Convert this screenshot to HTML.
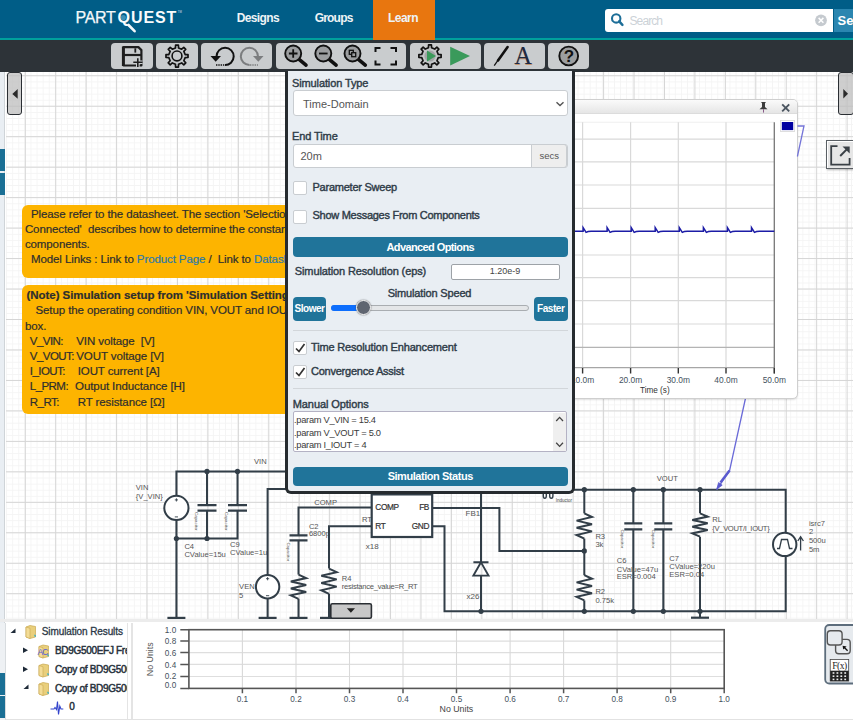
<!DOCTYPE html>
<html><head><meta charset="utf-8">
<style>
*{box-sizing:border-box;margin:0;padding:0}
html,body{width:853px;height:720px;overflow:hidden;background:#fff;font-family:"Liberation Sans",sans-serif;color:#333}
.abs{position:absolute}
#hdr{position:absolute;left:0;top:0;width:853px;height:38px;background:#005d87}
#teal{position:absolute;left:0;top:38px;width:853px;height:2px;background:#00a09c}
#tb{position:absolute;left:0;top:40px;width:853px;height:32px;background:#2d3338}
.nav{position:absolute;font-size:12px;line-height:12px;font-weight:bold;color:#eef3f6}
#learn{position:absolute;left:373px;top:0;width:62px;height:40px;background:#e8760f}
.btn{position:absolute;top:43px;height:26px;background:#c9ccce;border-radius:4px}
#canvas{position:absolute;left:6px;top:72px;width:847px;height:547.3px;background-color:#fff;
background-image:linear-gradient(to right,#d5d5d5 1.3px,transparent 1.3px),linear-gradient(to bottom,#d5d5d5 1.3px,transparent 1.3px),linear-gradient(to right,#f4f4f4 1px,transparent 1px),linear-gradient(to bottom,#f4f4f4 1px,transparent 1px);
background-size:30.44px 30.47px,30.44px 30.47px,6.088px 6.094px,6.088px 6.094px;
background-position:18.8px 3.25px,18.8px 3.25px,0.24px 3.4px,0.24px 3.4px}
#lstrip{position:absolute;left:0;top:72px;width:5px;height:648px;background:#e9eef3;border-right:1px solid #cfd4d8}
.orange{position:absolute;background:#fdb400;border-radius:6px;font-size:12px;line-height:15.2px;color:#2d2d2d;white-space:pre;overflow:hidden}
#sim{position:absolute;left:285.2px;top:71px;width:289.8px;height:422.8px;background:#e9eef3;border:3.2px solid #262b2f;border-top:none;border-radius:0 0 6px 6px}
.lbl{position:absolute;font-size:11px;font-weight:normal;-webkit-text-stroke:0.4px #2e3b47;color:#2e3b47;letter-spacing:-0.15px;white-space:pre}
.inp{position:absolute;background:#fff;border:1px solid #c9cdd1;border-radius:3px}
.bbtn{position:absolute;background:#20749a;color:#fff;font-weight:bold;font-size:11px;text-align:center;border-radius:4px;letter-spacing:-0.4px}
.cb{position:absolute;width:14px;height:14px;background:#fff;border:1px solid #c9cdd1;border-radius:2px}
#popup{position:absolute;left:560px;top:100px;width:238px;height:297px;background:#fff;border:1px solid #d0d0d0;border-radius:6px;overflow:hidden}
.bot{position:absolute}
.otx{position:absolute;font-size:11.5px;line-height:15.2px;color:#2e2e2e;white-space:pre;letter-spacing:-0.1px;-webkit-text-stroke:0.2px #2e2e2e}
</style></head><body>

<div id="canvas"></div>
<!--SCHEM-->
<svg class="abs" style="left:0;top:0" width="853" height="720" font-family="Liberation Sans, sans-serif"><g fill="none" stroke="#323e48" stroke-width="2.0"><path d="M286.0 471.4 L176.4 471.4 L176.4 495.8"/>
<path d="M176.4 519.9 L176.4 617.9"/>
<circle cx="176.4" cy="507.9" r="12.1" fill="#fff"/>
<path d="M174.8 499.9 L178.0 499.9 M176.4 498.29999999999995 L176.4 501.5 M174.8 516.9 L178.0 516.9" stroke-width="0.9"/>
<path d="M167.4 617.9 L185.4 617.9" stroke-width="2.2"/>
<path d="M207.0 471.4 L207.0 505.1"/>
<path d="M207.0 510.7 L207.0 538.5"/>
<path d="M197.5 505.1 L216.5 505.1 M197.5 510.7 L216.5 510.7" stroke-width="2.2"/>
<path d="M237.5 471.4 L237.5 505.1"/>
<path d="M237.5 510.7 L237.5 538.5 L176.4 538.5"/>
<path d="M228.0 505.1 L247.0 505.1 M228.0 510.7 L247.0 510.7" stroke-width="2.2"/>
<circle cx="207" cy="471.4" r="2.6" fill="#323e48" stroke="none"/>
<circle cx="237.5" cy="471.4" r="2.6" fill="#323e48" stroke="none"/>
<circle cx="176.4" cy="538.5" r="2.6" fill="#323e48" stroke="none"/>
<circle cx="207" cy="538.5" r="2.6" fill="#323e48" stroke="none"/>
<text x="254" y="464.4" font-size="7.6" fill="#555" stroke="none" text-anchor="start" >VIN</text>
<text x="135.8" y="490.3" font-size="7.6" fill="#555" stroke="none" text-anchor="start" >VIN</text>
<text x="135.8" y="498.5" font-size="7.6" fill="#555" stroke="none" text-anchor="start" >{V_VIN}</text>
<text x="184.4" y="548.9" font-size="7.6" fill="#555" stroke="none" text-anchor="start" >C4</text>
<text x="184.4" y="556.5" font-size="7.6" fill="#555" stroke="none" text-anchor="start" >CValue=15u</text>
<text x="230" y="546.8" font-size="7.6" fill="#555" stroke="none" text-anchor="start" >C9</text>
<text x="230" y="554.5" font-size="7.6" fill="#555" stroke="none" text-anchor="start" >CValue=1u</text>
<path d="M286.0 489.1 L267.6 489.1 L267.6 575.0"/>
<path d="M267.6 598.4 L267.6 617.9"/>
<circle cx="267.6" cy="586.7" r="11.7" fill="#fff"/>
<path d="M266.0 578.7 L269.20000000000005 578.7 M267.6 577.1 L267.6 580.3000000000001 M266.0 595.7 L269.20000000000005 595.7" stroke-width="0.9"/>
<path d="M258.6 617.9 L276.6 617.9" stroke-width="2.2"/>
<text x="239.1" y="588.7" font-size="7.6" fill="#555" stroke="none" text-anchor="start" >VEN</text>
<text x="239.1" y="597.8" font-size="7.6" fill="#555" stroke="none" text-anchor="start" >5</text>
<path d="M371.7 507.6 L298.5 507.6 L298.5 535.4"/>
<path d="M298.5 540.4 L298.5 574.6"/>
<path d="M289.5 535.4 L307.5 535.4 M289.5 540.4 L307.5 540.4" stroke-width="2.2"/>
<path d="M298.5 574.6 L306.2 578.1 L290.8 581.5 L306.2 585.0 L290.8 588.4 L306.2 591.9 L290.8 595.3 L298.5 598.8"/>
<path d="M298.5 598.8 L298.5 617.9"/>
<path d="M289.5 617.9 L307.5 617.9" stroke-width="2.2"/>
<text x="314.2" y="504.6" font-size="7.6" fill="#555" stroke="none" text-anchor="start" >COMP</text>
<text x="308.9" y="529.3" font-size="7.6" fill="#555" stroke="none" text-anchor="start" >C2</text>
<text x="308.9" y="536" font-size="7.6" fill="#555" stroke="none" text-anchor="start" >6800p</text>
<path d="M371.7 526.3 L329.0 526.3 L329.0 568.6"/>
<path d="M329.0 568.6 L336.7 572.2 L321.3 575.8 L336.7 579.4 L321.3 583.0 L336.7 586.6 L321.3 590.2 L329.0 593.8"/>
<path d="M329.0 593.8 L329.0 617.9"/>
<path d="M320 617.9 L338 617.9" stroke-width="2.2"/>
<text x="361.9" y="522.3" font-size="7.6" fill="#555" stroke="none" text-anchor="start" >RT</text>
<text x="341.7" y="580.7" font-size="7.6" fill="#555" stroke="none" text-anchor="start" >R4</text>
<text x="341.7" y="588.7" font-size="7.6" fill="#555" stroke="none" text-anchor="start" letter-spacing="-0.26">resistance_value=R_RT</text>
<rect x="371.7" y="494.4" width="60.5" height="42.6" fill="#fff" stroke-width="2.2"/>
<text x="375.3" y="510.3" font-size="8.3" fill="#333"  text-anchor="start" letter-spacing="-0.4" stroke="#333" stroke-width="0.2">COMP</text>
<text x="429" y="510.3" font-size="8.3" fill="#333"  text-anchor="end" letter-spacing="-0.4" stroke="#333" stroke-width="0.2">FB</text>
<text x="375.3" y="528.9" font-size="8.3" fill="#333"  text-anchor="start" letter-spacing="-0.4" stroke="#333" stroke-width="0.2">RT</text>
<text x="429" y="528.9" font-size="8.3" fill="#333"  text-anchor="end" letter-spacing="-0.4" stroke="#333" stroke-width="0.2">GND</text>
<text x="365.8" y="548.5" font-size="8" fill="#555" stroke="none" text-anchor="start" >x18</text>
<path d="M432.2 507.9 L499.4 507.9 L499.4 550.9 L584.3 550.9"/>
<path d="M432.2 526.2 L444.5 526.2 L444.5 611.3 L785.7 611.3 L785.7 556.3"/>
<path d="M481.0 490.0 L481.0 562.3"/>
<path d="M481.0 575.6 L481.0 611.3"/>
<path d="M473.4 562.3 L488.5 562.3 M481 562.3 L473.4 575.6 L488.5 575.6 Z" fill="none" stroke-width="1.9"/>
<text x="465.6" y="515.7" font-size="8" fill="#555" stroke="none" text-anchor="start" >FB1</text>
<text x="466.5" y="598.7" font-size="8" fill="#555" stroke="none" text-anchor="start" >x26</text>
<circle cx="481" cy="611.3" r="2.6" fill="#323e48" stroke="none"/>
<path d="M574.0 489.7 L785.7 489.7 L785.7 532.5"/>
<path d="M584.3 489.7 L584.3 513.4"/>
<path d="M584.3 513.4 L592.0 517.0 L576.6 520.6 L592.0 524.2 L576.6 527.8 L592.0 531.4 L576.6 535.0 L584.3 538.6"/>
<path d="M584.3 538.6 L584.3 575.2"/>
<path d="M584.3 575.2 L592.0 578.8 L576.6 582.4 L592.0 586.0 L576.6 589.6 L592.0 593.2 L576.6 596.8 L584.3 600.4"/>
<path d="M584.3 600.4 L584.3 611.3"/>
<circle cx="584.3" cy="489.7" r="2.6" fill="#323e48" stroke="none"/>
<circle cx="584.3" cy="550.9" r="2.6" fill="#323e48" stroke="none"/>
<circle cx="584.3" cy="611.3" r="2.6" fill="#323e48" stroke="none"/>
<text x="595.4" y="539.4" font-size="7.6" fill="#555" stroke="none" text-anchor="start" >R3</text>
<text x="595.4" y="547.4" font-size="7.6" fill="#555" stroke="none" text-anchor="start" >3k</text>
<text x="595.4" y="594.3" font-size="7.6" fill="#555" stroke="none" text-anchor="start" >R2</text>
<text x="595.4" y="602.7" font-size="7.6" fill="#555" stroke="none" text-anchor="start" >0.75k</text>
<path d="M543.3 493 L543.3 496 Q543.3 498.3 544.8 498.3 Q546.3 498.3 546.3 496 L546.3 493 M549.7 493 L549.7 496 Q549.7 498.3 551.3 498.3 Q552.9 498.3 552.9 496 L552.9 493" fill="none" stroke-width="1.4"/>
<text x="555.8" y="502" font-size="4.5" fill="#444" stroke="none" text-anchor="start" >Inductor</text>
<path d="M633.3 489.7 L633.3 523.3"/>
<path d="M633.3 529.3 L633.3 611.3"/>
<path d="M624.3 523.3 L642.3 523.3 M624.3 529.3 L642.3 529.3" stroke-width="2.2"/>
<circle cx="633.3" cy="489.7" r="2.6" fill="#323e48" stroke="none"/>
<circle cx="633.3" cy="611.3" r="2.6" fill="#323e48" stroke="none"/>
<path d="M663.3 489.7 L663.3 523.3"/>
<path d="M663.3 529.3 L663.3 611.3"/>
<path d="M654.3 523.3 L672.3 523.3 M654.3 529.3 L672.3 529.3" stroke-width="2.2"/>
<circle cx="663.3" cy="489.7" r="2.6" fill="#323e48" stroke="none"/>
<circle cx="663.3" cy="611.3" r="2.6" fill="#323e48" stroke="none"/>
<path d="M700.0 489.7 L700.0 513.3"/>
<path d="M700.0 513.3 L707.7 516.6 L692.3 520.0 L707.7 523.3 L692.3 526.7 L707.7 530.0 L692.3 533.4 L700.0 536.7"/>
<path d="M700.0 536.7 L700.0 617.7"/>
<path d="M691 617.7 L709 617.7" stroke-width="2.2"/>
<circle cx="700" cy="489.7" r="2.6" fill="#323e48" stroke="none"/>
<circle cx="700" cy="611.3" r="2.6" fill="#323e48" stroke="none"/>
<text x="656.7" y="481" font-size="7.6" fill="#555" stroke="none" text-anchor="start" >VOUT</text>
<text x="712.3" y="521.7" font-size="7.6" fill="#555" stroke="none" text-anchor="start" >RL</text>
<text x="712.3" y="531" font-size="7.6" fill="#555" stroke="none" text-anchor="start" letter-spacing="-0.33">{V_VOUT/I_IOUT}</text>
<text x="616.7" y="563.3" font-size="7.6" fill="#555" stroke="none" text-anchor="start" >C6</text>
<text x="616.7" y="571.7" font-size="7.6" fill="#555" stroke="none" text-anchor="start" >CValue=47u</text>
<text x="616.7" y="579.3" font-size="7.6" fill="#555" stroke="none" text-anchor="start" >ESR=0.004</text>
<text x="669.3" y="560.7" font-size="7.6" fill="#555" stroke="none" text-anchor="start" >C7</text>
<text x="669.3" y="569" font-size="7.6" fill="#555" stroke="none" text-anchor="start" >CValue=220u</text>
<text x="669.3" y="576.7" font-size="7.6" fill="#555" stroke="none" text-anchor="start" >ESR=0.04</text>
<circle cx="784.7" cy="544.4" r="11.7" fill="#fff"/>
<path d="M777 548.5 L779.5 548.5 L781.5 539.5 L787.5 539.5 L789.5 548.5 L792.5 548.5" fill="none" stroke-width="1.3"/>
<path d="M800.6 550.6 L800.6 537.5 M797.8 541 L800.6 536.7 L803.4 541" fill="none" stroke-width="1.3"/>
<text x="808.9" y="525.8" font-size="7.6" fill="#555" stroke="none" text-anchor="start" >isrc7</text>
<text x="808.9" y="534.4" font-size="7.6" fill="#555" stroke="none" text-anchor="start" >2</text>
<text x="808.9" y="543" font-size="7.6" fill="#555" stroke="none" text-anchor="start" >500u</text>
<text x="808.9" y="551.6" font-size="7.6" fill="#555" stroke="none" text-anchor="start" >5m</text>
<text x="195.1" y="512" font-size="4.4" fill="#555" stroke="none" transform="rotate(90 195.1 512)">Capacitor</text>
<text x="225.1" y="512" font-size="4.4" fill="#555" stroke="none" transform="rotate(90 225.1 512)">Capacitor</text>
<text x="286.5" y="542.4" font-size="4.4" fill="#555" stroke="none" transform="rotate(90 286.5 542.4)">Capacitor</text>
<text x="621.3" y="529.4" font-size="4.4" fill="#555" stroke="none" transform="rotate(90 621.3 529.4)">Capacitor</text>
<text x="651.9" y="529.4" font-size="4.4" fill="#555" stroke="none" transform="rotate(90 651.9 529.4)">Capacitor</text>
<rect x="330.8" y="603.8" width="40.6" height="14.5" rx="1.5" fill="#c8c8c8" stroke="#2a2e33" stroke-width="1.6"/>
<path d="M346.8 608.3 L355 608.3 L350.9 612.8 Z" fill="#222" stroke="none"/>
<path d="M746 396 L729.6 470.4 L716.7 489.7" fill="none" stroke="#6a6ad8" stroke-width="1.3"/>
<path d="M729.6 470.4 L720.5 482.6" fill="none" stroke="#5a5acf" stroke-width="2.5"/><path d="M716.8 489 L718.6 482.6 L722.2 485.2 Z" fill="#5a5acf" stroke="#5a5acf" stroke-width="0.8"/></g></svg>
<!--/SCHEM-->
<div id="lstrip">
  <div class="abs" style="left:0;top:77px;width:5px;height:22px;background:#1a6f95"></div>
  <div class="abs" style="left:0;top:101px;width:5px;height:22px;background:#1a6f95"></div>
</div>

<!-- header -->
<div id="hdr"></div>
<div id="learn"></div>
<div id="teal"></div>
<div class="abs" style="left:373px;top:38px;width:62px;height:2px;background:#e8760f"></div>
<div class="abs" style="left:75.6px;top:9.7px;font-size:16px;line-height:16px;color:#f4f8fa;letter-spacing:-0.35px;white-space:pre;-webkit-text-stroke:0.25px #f4f8fa">PART</div>
<div class="abs" style="left:117.6px;top:9.7px;font-size:16px;line-height:16px;font-weight:bold;color:#f8fbfc;letter-spacing:0.9px;white-space:pre">QUEST</div>
<svg class="abs" style="left:0;top:0" width="200" height="38"><path d="M128.5 25 L134.6 31.2" stroke="#f4f8fa" stroke-width="2.6" stroke-linecap="round"/><circle cx="123.3" cy="17.6" r="2.6" fill="#3d8fb3"/><text x="177.8" y="12.6" font-size="2.8" fill="#dde" font-family="Liberation Sans">TM</text></svg>
<div class="nav" style="left:236.8px;top:11.8px;letter-spacing:-0.65px">Designs</div>
<div class="nav" style="left:314.7px;top:11.8px;letter-spacing:-0.8px">Groups</div>
<div class="nav" style="left:388px;top:11.8px;letter-spacing:-0.55px">Learn</div>
<div class="abs" style="left:604.8px;top:8.6px;width:228px;height:23.2px;background:#fff;border-radius:3px 0 0 3px"></div>
<svg class="abs" style="left:600px;top:0" width="253" height="38"><circle cx="16.2" cy="18.4" r="4.2" fill="none" stroke="#1d6e98" stroke-width="2.1"/><path d="M19.2 21.4 L22.4 24.8" stroke="#1d6e98" stroke-width="2.5" stroke-linecap="round"/><circle cx="221" cy="20.3" r="5.9" fill="#c5cacf"/><path d="M218.6 17.9 L223.4 22.7 M223.4 17.9 L218.6 22.7" stroke="#fff" stroke-width="1.5"/></svg>
<div class="abs" style="left:629.5px;top:14.5px;font-size:12px;line-height:12px;color:#ccd2d7;letter-spacing:-0.9px">Search</div>
<div class="abs" style="left:834.2px;top:8.6px;width:19px;height:23.2px;background:#2a86b0"></div>
<div class="abs" style="left:837.5px;top:14px;font-size:13px;line-height:13px;font-weight:bold;color:#fff">Se</div>

<!-- toolbar -->
<div id="tb"></div>
<div class="btn" style="left:111px;width:42px"></div>
<div class="btn" style="left:156px;width:42px"></div>
<div class="btn" style="left:201px;width:71px"></div>
<div class="btn" style="left:276px;width:130px"></div>
<div class="btn" style="left:410px;width:71px"></div>
<div class="btn" style="left:484px;width:61px"></div>
<div class="btn" style="left:548px;width:41px"></div>

<!--TB-->
<svg class="abs" style="left:0;top:0" width="853" height="72"><path d="M123.6 47.1 L138.4 47.1 L141.4 50.1 L141.4 65.5 L123.6 65.5 Z" fill="none" stroke="#1e1e1e" stroke-width="2.2" stroke-linejoin="round"/>
<path d="M123.3 46.5 L123.3 66" stroke="#1e1e1e" stroke-width="2.8"/>
<path d="M124 55 L141.4 55" stroke="#1e1e1e" stroke-width="2.2"/>
<path d="M135.3 48.3 L135.3 52.6" stroke="#1e1e1e" stroke-width="1.8"/>
<path d="M133.3 62.3 L142.5 62.3 M137.8 58.2 L137.8 67" stroke="#c9ccce" stroke-width="3.6"/>
<path d="M133.3 62.3 L142.5 62.3 M137.8 58.2 L137.8 67" stroke="#1e1e1e" stroke-width="1.6"/>
<path d="M175.44 47.95 L175.61 45.09 L178.39 45.09 L178.56 47.95 L181.67 49.24 L183.80 47.33 L185.77 49.30 L183.86 51.43 L185.15 54.54 L188.01 54.71 L188.01 57.49 L185.15 57.66 L183.86 60.77 L185.77 62.90 L183.80 64.87 L181.67 62.96 L178.56 64.25 L178.39 67.11 L175.61 67.11 L175.44 64.25 L172.33 62.96 L170.20 64.87 L168.23 62.90 L170.14 60.77 L168.85 57.66 L165.99 57.49 L165.99 54.71 L168.85 54.54 L170.14 51.43 L168.23 49.30 L170.20 47.33 L172.33 49.24 Z" fill="#c4c7c9" stroke="#111" stroke-width="1.7" stroke-linejoin="round"/>
<circle cx="177.0" cy="55.95" r="4.9" fill="#c9ccce" stroke="#111" stroke-width="1.6"/>
<path d="M216.5 56.5 A8.6 8.6 0 1 1 224.8 65" fill="none" stroke="#111" stroke-width="2"/>
<path d="M210.5 56 L221 56 L215.7 61.8 Z" fill="#111"/>
<path d="M216 65 L224 65" stroke="#111" stroke-width="1.6" stroke-dasharray="1.4 0.9"/>
<path d="M258 56.5 A8.6 8.6 0 1 0 249.6 65" fill="none" stroke="#7b7d7f" stroke-width="2"/>
<path d="M253 56 L263.5 56 L258.3 61.8 Z" fill="#7b7d7f"/>
<path d="M250 65 L258 65" stroke="#7b7d7f" stroke-width="1.6" stroke-dasharray="1.4 0.9"/>
<path d="M298.8 59.1 L306.0 65.1" stroke="#111" stroke-width="3.6" stroke-linecap="round"/>
<circle cx="293.2" cy="53.5" r="8.0" fill="#9c9ea0" stroke="#111" stroke-width="1.9"/>
<path d="M288.9 53.5 L297.5 53.5 M293.2 49.2 L293.2 57.8" stroke="#111" stroke-width="1.8"/>
<path d="M328.90000000000003 59.1 L336.1 65.1" stroke="#111" stroke-width="3.6" stroke-linecap="round"/>
<circle cx="323.3" cy="53.5" r="8.0" fill="#9c9ea0" stroke="#111" stroke-width="1.9"/>
<path d="M319.0 53.5 L327.6 53.5" stroke="#111" stroke-width="1.8"/>
<path d="M358.1 59.1 L365.3 65.1" stroke="#111" stroke-width="3.6" stroke-linecap="round"/>
<circle cx="352.5" cy="53.5" r="8.0" fill="#9c9ea0" stroke="#111" stroke-width="1.9"/>
<rect x="349.3" y="50.3" width="4" height="4" fill="none" stroke="#111" stroke-width="1.3"/><rect x="351.7" y="52.7" width="4" height="4" fill="#9c9ea0" stroke="#111" stroke-width="1.3"/>
<path d="M375.5 52 L375.5 48 L380.5 48 M390.5 48 L396 48 L396 52 M396 60.5 L396 64.5 L390.5 64.5 M380.5 64.5 L375.5 64.5 L375.5 60.5" fill="none" stroke="#111" stroke-width="2"/>
<path d="M428.43 47.75 L428.60 44.89 L431.40 44.89 L431.57 47.75 L434.72 49.05 L436.86 47.15 L438.85 49.14 L436.95 51.28 L438.25 54.43 L441.11 54.60 L441.11 57.40 L438.25 57.57 L436.95 60.72 L438.85 62.86 L436.86 64.85 L434.72 62.95 L431.57 64.25 L431.40 67.11 L428.60 67.11 L428.43 64.25 L425.28 62.95 L423.14 64.85 L421.15 62.86 L423.05 60.72 L421.75 57.57 L418.89 57.40 L418.89 54.60 L421.75 54.43 L423.05 51.28 L421.15 49.14 L423.14 47.15 L425.28 49.05 Z" fill="#c4c7c9" stroke="#111" stroke-width="1.7" stroke-linejoin="round"/>
<circle cx="430" cy="56" r="5.6" fill="#a3a5a7"/>
<path d="M427 50.5 L436 56 L427 61.5 Z" fill="#3a9a5b"/>
<path d="M450.2 46.7 L470 56.1 L450.2 65.6 Z" fill="#3a9a5b"/>
<path d="M507.6 47 L498 60.5" stroke="#111" stroke-width="2.6" stroke-linecap="round"/>
<path d="M498.5 59.5 L494.2 65.6" stroke="#111" stroke-width="1.3"/>
<text x="523.6" y="64.6" font-family="Liberation Serif" font-size="24.5" fill="#c07030" text-anchor="middle" opacity="0.6">A</text>
<text x="523.2" y="64.4" font-family="Liberation Serif" font-size="24.5" fill="#1d2a44" text-anchor="middle">A</text>
<circle cx="568.7" cy="56" r="9.4" fill="#9c9ea0" stroke="#111" stroke-width="1.9"/>
<text x="568.9" y="62.2" font-family="Liberation Sans" font-weight="bold" font-size="17" fill="#111" text-anchor="middle">?</text></svg>
<!--/TB-->
<!-- orange boxes -->
<div class="orange" style="left:22.3px;top:205.4px;width:300px;height:72.8px"></div>
<div class="orange" style="left:22.3px;top:285.3px;width:300px;height:128.4px"></div>
<div class="otx" style="left:31px;top:206.8px">Please refer to the datasheet. The section 'Selection of Components Externally</div>
<div class="otx" style="left:24.9px;top:222.0px">Connected'&nbsp; describes how to determine the constants of the external</div>
<div class="otx" style="left:24.9px;top:237.2px">components.</div>
<div class="otx" style="left:31px;top:252.4px">Model Links : Link to <span style="color:#2b79a8;-webkit-text-stroke-color:#2b79a8">Product Page</span> /&nbsp; Link to <span style="color:#2b79a8;-webkit-text-stroke-color:#2b79a8">Datasheet</span></div>
<div class="otx" style="left:26.5px;top:288.1px;font-weight:bold;letter-spacing:-0.05px">(Note) Simulation setup from 'Simulation Settings'</div>
<div class="otx" style="left:35.5px;top:303.3px">Setup the operating condition VIN, VOUT and IOUT in the Manual Options</div>
<div class="otx" style="left:24.9px;top:318.5px">box.</div>
<div class="otx" style="left:29.8px;top:333.7px;letter-spacing:-0.55px">V_VIN:</div><div class="otx" style="left:76.3px;top:333.7px">VIN voltage&nbsp; [V]</div>
<div class="otx" style="left:29.8px;top:348.9px;letter-spacing:-0.55px">V_VOUT:</div><div class="otx" style="left:76.3px;top:348.9px">VOUT voltage [V]</div>
<div class="otx" style="left:29.8px;top:364.1px;letter-spacing:-0.55px">I_IOUT:</div><div class="otx" style="left:77.7px;top:364.1px">IOUT current [A]</div>
<div class="otx" style="left:29.8px;top:379.3px;letter-spacing:-0.55px">L_PRM:</div><div class="otx" style="left:75.1px;top:379.3px">Output Inductance [H]</div>
<div class="otx" style="left:29.8px;top:394.5px;letter-spacing:-0.55px">R_RT:</div><div class="otx" style="left:77.7px;top:394.5px">RT resistance [&#937;]</div>

<!-- side buttons -->
<div class="abs" style="left:6.9px;top:72px;width:15.3px;height:43px;background:rgba(190,190,190,0.75);border:1.6px solid #2a2e33;border-radius:3px"></div>
<svg class="abs" style="left:0;top:60px" width="30" height="60"><path d="M12.3 33.9 L17.7 29 L17.7 38.8 Z" fill="#2b2b2b"/></svg>
<div class="abs" style="left:838.4px;top:72px;width:16px;height:42.7px;background:rgba(190,190,190,0.75);border:1.6px solid #2a2e33;border-radius:3px"></div>
<svg class="abs" style="left:820px;top:60px" width="33" height="60"><path d="M28 33.7 L23.3 29 L23.3 38.4 Z" fill="#2b2b2b"/></svg>
<div class="abs" style="left:826px;top:140.3px;width:30px;height:28.9px;background:#e6e6e6;border:1.3px solid #5a5f64;box-shadow:1px 1px 2px rgba(0,0,0,0.3), inset 1px 1px 0 #fff"></div>
<svg class="abs" style="left:820px;top:130px" width="33" height="50"><path d="M17.5 16.1 L11.2 16.1 L11.2 34.6 L29.6 34.6 L29.6 28" fill="none" stroke="#3a4046" stroke-width="1.8"/><path d="M20.2 26 L27.5 18.6" stroke="#3a4046" stroke-width="2"/><path d="M22.5 16.4 L29.7 16.4 L29.7 23.6 Z" fill="#3a4046"/></svg>
<!-- popup -->
<div class="abs" style="left:520px;top:99.4px;width:277.6px;height:300px;background:#fff;border:1px solid #cfcfcf;border-radius:5px;box-shadow:0 1px 2px rgba(0,0,0,0.12);overflow:hidden">
<div class="abs" style="left:0;top:0;width:100%;height:14px;background:linear-gradient(#fafafa,#e6e6e6);border-bottom:1px solid #dcdcdc"></div>
</div>
<svg class="abs" style="left:0;top:0" width="853" height="720" font-family="Liberation Sans, sans-serif">
<path d="M540 122.3 L774.3 122.3" stroke="#efefef" stroke-width="1.1"/><path d="M540 139.2 L774.3 139.2" stroke="#d9d9d9" stroke-width="1.2"/><path d="M540 161.8 L774.3 161.8" stroke="#d9d9d9" stroke-width="1.2"/><path d="M540 185.0 L774.3 185.0" stroke="#d9d9d9" stroke-width="1.2"/><path d="M540 208.4 L774.3 208.4" stroke="#d9d9d9" stroke-width="1.2"/><path d="M540 255.0 L774.3 255.0" stroke="#d9d9d9" stroke-width="1.2"/><path d="M540 277.6 L774.3 277.6" stroke="#d9d9d9" stroke-width="1.2"/><path d="M540 300.7 L774.3 300.7" stroke="#d9d9d9" stroke-width="1.2"/><path d="M540 324.0 L774.3 324.0" stroke="#d9d9d9" stroke-width="1.2"/><path d="M582.6 122.3 L582.6 367.7" stroke="#d9d9d9" stroke-width="1.2"/><path d="M630.6 122.3 L630.6 367.7" stroke="#d9d9d9" stroke-width="1.2"/><path d="M678.3 122.3 L678.3 367.7" stroke="#d9d9d9" stroke-width="1.2"/><path d="M726.0 122.3 L726.0 367.7" stroke="#d9d9d9" stroke-width="1.2"/><path d="M540 347.4 L774.3 347.4" stroke="#b4b4b4" stroke-width="1.2"/><path d="M540 367.7 L774.3 367.7" stroke="#a6a6a6" stroke-width="1.2"/><path d="M774.3 122.3 L774.3 373.6" stroke="#777" stroke-width="1.3"/><path d="M582.6 368 L582.6 373.6 M630.6 368 L630.6 373.6 M678.3 368 L678.3 373.6 M726.0 368 L726.0 373.6 M774.3 368 L774.3 373.6" stroke="#333" stroke-width="1.4"/><path d="M540 231.2 L559.1 231.2 L559.1 227.6 L562.1 232.4 L564.1 231.6 L567.1 231.2 L583.1 231.2 L583.1 227.6 L586.1 232.4 L588.1 231.6 L591.1 231.2 L607.1 231.2 L607.1 227.6 L610.1 232.4 L612.1 231.6 L615.1 231.2 L631.2 231.2 L631.2 227.6 L634.2 232.4 L636.2 231.6 L639.2 231.2 L655.2 231.2 L655.2 227.6 L658.2 232.4 L660.2 231.6 L663.2 231.2 L679.3 231.2 L679.3 227.6 L682.3 232.4 L684.3 231.6 L687.3 231.2 L703.4 231.2 L703.4 227.6 L706.4 232.4 L708.4 231.6 L711.4 231.2 L727.4 231.2 L727.4 227.6 L730.4 232.4 L732.4 231.6 L735.4 231.2 L751.5 231.2 L751.5 227.6 L754.5 232.4 L756.5 231.6 L759.5 231.2 L774.3 231.2" fill="none" stroke="#1c1ca6" stroke-width="1.5"/>
<text x="582.6" y="383.2" font-size="8.4" fill="#44525e" text-anchor="middle">10.0m</text><text x="630.6" y="383.2" font-size="8.4" fill="#44525e" text-anchor="middle">20.0m</text><text x="678.3" y="383.2" font-size="8.4" fill="#44525e" text-anchor="middle">30.0m</text><text x="726.0" y="383.2" font-size="8.4" fill="#44525e" text-anchor="middle">40.0m</text><text x="774.3" y="383.2" font-size="8.4" fill="#44525e" text-anchor="middle">50.0m</text><text x="654.8" y="392.8" font-size="8.2" fill="#333" text-anchor="middle">Time (s)</text>
<rect x="780.5" y="120.5" width="14" height="11" fill="#fff" stroke="#dedede" stroke-width="1"/>
<rect x="781.8" y="122" width="11.4" height="8.1" fill="#0000a0"/>
<path d="M782.2 104.3 L789.2 111.3 M789.2 104.3 L782.2 111.3" stroke="#4b5560" stroke-width="1.9"/>
<path d="M761 102 L766 102 L765 103.2 L765 107 L767.5 109.2 L759.5 109.2 L762 107 L762 103.2 Z" fill="#3c3c3c"/>
<path d="M763.5 109.2 L763.5 112.6" stroke="#8a5a8a" stroke-width="1"/>
<path d="M797.4 126 L804 126 L797.4 156.5" fill="none" stroke="#7474d8" stroke-width="1.3"/>
</svg>

<!-- sim panel -->
<div id="sim"></div>
<div class="lbl" style="left:292px;top:77.2px;letter-spacing:-0.12px">Simulation Type</div>
<div class="inp" style="left:293px;top:89.8px;width:274.5px;height:26.6px"></div>
<div class="abs" style="left:303px;top:99px;font-size:11px;line-height:11px;color:#555">Time-Domain</div>
<svg class="abs" style="left:555px;top:101px" width="10" height="6"><path d="M1.5 1.2 L5 4.6 L8.5 1.2" fill="none" stroke="#555" stroke-width="1.4"/></svg>
<div class="lbl" style="left:292px;top:130.3px;letter-spacing:-0.1px">End Time</div>
<div class="inp" style="left:293px;top:144px;width:274.5px;height:24px"></div>
<div class="abs" style="left:530.6px;top:144px;width:36.9px;height:24px;background:#eeeeee;border:1px solid #c9cdd1;border-radius:0 3px 3px 0"></div>
<div class="abs" style="left:300.5px;top:150.6px;font-size:11px;line-height:11px;color:#555">20m</div>
<div class="abs" style="left:539.5px;top:150.6px;font-size:9.5px;line-height:9.5px;color:#555">secs</div>
<div class="cb" style="left:293px;top:181px"></div>
<div class="lbl" style="left:312.5px;top:181px;letter-spacing:-0.24px">Parameter Sweep</div>
<div class="cb" style="left:293px;top:209.5px"></div>
<div class="lbl" style="left:312.5px;top:209px;letter-spacing:-0.27px">Show Messages From Components</div>
<div class="bbtn" style="left:293px;top:237px;width:274.5px;height:20px;line-height:20px;letter-spacing:-0.6px">Advanced Options</div>
<div class="lbl" style="left:294.8px;top:265px;letter-spacing:-0.12px">Simulation Resolution (eps)</div>
<div class="abs" style="left:450.5px;top:264px;width:109px;height:15.8px;background:#fff;border:1px solid #9da2a7;border-radius:2px;font-size:9px;line-height:13px;text-align:center;color:#444">1.20e-9</div>
<div class="lbl" style="left:338px;top:287.2px;width:183px;text-align:center;letter-spacing:-0.16px">Simulation Speed</div>
<div class="bbtn" style="left:293px;top:297px;width:33px;height:23.5px;line-height:23.5px;font-size:10px;letter-spacing:-0.5px">Slower</div>
<div class="bbtn" style="left:534px;top:297px;width:33.5px;height:23.5px;line-height:23.5px;font-size:10px;letter-spacing:-0.45px">Faster</div>
<div class="abs" style="left:331px;top:304.8px;width:198px;height:6px;background:#e4e6e8;border:1.3px solid #a9adb1;border-radius:3px"></div>
<div class="abs" style="left:331px;top:304.8px;width:33px;height:6px;background:#0d6efd;border-radius:3px 0 0 3px"></div>
<div class="abs" style="left:355.9px;top:300.3px;width:15px;height:15px;background:#5f6570;border:1.6px solid #fff;border-radius:50%;box-shadow:0 0 1.5px #444"></div>
<div class="abs" style="left:293px;top:329.5px;width:274.5px;height:1px;background:#d2d6da"></div>
<div class="cb" style="left:293px;top:341px"></div>
<svg class="abs" style="left:293px;top:341px" width="14" height="14"><path d="M3 7.5 L6 10.5 L11.5 3" fill="none" stroke="#333" stroke-width="1.7"/></svg>
<div class="lbl" style="left:311px;top:341.4px;letter-spacing:-0.16px">Time Resolution Enhancement</div>
<div class="cb" style="left:293px;top:364.5px"></div>
<svg class="abs" style="left:293px;top:364.5px" width="14" height="14"><path d="M3 7.5 L6 10.5 L11.5 3" fill="none" stroke="#333" stroke-width="1.7"/></svg>
<div class="lbl" style="left:311px;top:365.3px;letter-spacing:-0.24px">Convergence Assist</div>
<div class="abs" style="left:293px;top:387.5px;width:274.5px;height:1px;background:#d2d6da"></div>
<div class="lbl" style="left:292.7px;top:397.7px;letter-spacing:-0.07px">Manual Options</div>
<div class="abs" style="left:293px;top:410.8px;width:274.3px;height:41.4px;background:#fff;border:1px solid #b4b2c4;border-radius:2px"></div>
<div class="abs" style="left:552.9px;top:413px;width:13.2px;height:37.6px;background:#efefef"></div>
<div class="abs" style="left:294px;top:414px;font-size:9.3px;line-height:12.6px;color:#3a3a3a;white-space:pre;letter-spacing:-0.28px">.param V_VIN = 15.4
.param V_VOUT = 5.0
.param I_IOUT = 4</div>
<svg class="abs" style="left:553px;top:411px" width="14" height="40"><path d="M3.2 10 L6.6 6.4 L10 10" fill="none" stroke="#444" stroke-width="1.3"/><path d="M3.2 31.8 L6.6 35.4 L10 31.8" fill="none" stroke="#444" stroke-width="1.3"/></svg>
<div class="bbtn" style="left:293px;top:466.7px;width:274.5px;height:19.7px;line-height:19.7px;letter-spacing:-0.45px">Simulation Status</div>


<!-- bottom -->
<div class="abs" style="left:0;top:619.3px;width:853px;height:3.2px;background:#ececec"></div>
<div class="abs" style="left:0;top:622.5px;width:853px;height:97.5px;background:#fff"></div>
<div class="abs" style="left:0;top:718.5px;width:853px;height:1.5px;background:#e2e2e2"></div>
<div class="abs" style="left:0;top:622.5px;width:5px;height:97.5px;background:#eef1f4"></div>
<div class="abs" style="left:5px;top:622.5px;width:1.3px;height:97.5px;background:#d8dcdf"></div>
<div class="abs" style="left:0;top:673px;width:4.7px;height:21.5px;background:#1a6f95"></div>
<div class="abs" style="left:0;top:696.2px;width:4.7px;height:22.3px;background:#1a6f95"></div>
<div class="abs" style="left:126.6px;top:622.5px;width:1.3px;height:96px;background:#e4e4e4"></div>
<div class="abs" style="left:131.4px;top:622.5px;width:1.3px;height:96px;background:#e4e4e4"></div>
<!--BOT-->
<svg class="abs" style="left:0;top:0" width="127" height="720" font-family="Liberation Sans, sans-serif"><path d="M10.5 633.0 L15.5 628.5 L15.5 633.0 Z" fill="#1e2a38"/><g transform="translate(25,625)"><path d="M1 2 L5 0.5 L10.5 1.5 L10.5 12 L5 13.5 L1 12 Z" fill="#e9cf7c" stroke="#c9a850" stroke-width="0.7"/><path d="M1 2 L5 3.3 L5 13.5 L1 12 Z" fill="#f3dc96" stroke="#c9a850" stroke-width="0.6"/><path d="M9.3 9.5 L10.8 10.2 L10.8 12 L9.3 11.3 Z" fill="#36b0c8"/></g><path d="M23 647.5 L28 650.3 L23 653.1 Z" fill="#1e2a38"/><g transform="translate(38,644.5)"><path d="M1 2 L5 0.5 L10.5 1.5 L10.5 12 L5 13.5 L1 12 Z" fill="#e9cf7c" stroke="#c9a850" stroke-width="0.7"/><path d="M1 2 L5 3.3 L5 13.5 L1 12 Z" fill="#f3dc96" stroke="#c9a850" stroke-width="0.6"/><path d="M9.3 9.5 L10.8 10.2 L10.8 12 L9.3 11.3 Z" fill="#36b0c8"/><text x="-0.5" y="10" font-family="Liberation Sans" font-size="8.5" fill="#5a5ad6" letter-spacing="-0.8">AC</text></g><path d="M23 666.5 L28 669.3 L23 672.1 Z" fill="#1e2a38"/><g transform="translate(38,663.5)"><path d="M1 2 L5 0.5 L10.5 1.5 L10.5 12 L5 13.5 L1 12 Z" fill="#e9cf7c" stroke="#c9a850" stroke-width="0.7"/><path d="M1 2 L5 3.3 L5 13.5 L1 12 Z" fill="#f3dc96" stroke="#c9a850" stroke-width="0.6"/><path d="M9.3 9.5 L10.8 10.2 L10.8 12 L9.3 11.3 Z" fill="#36b0c8"/></g><path d="M23.5 689.0 L28.5 684.5 L28.5 689.0 Z" fill="#1e2a38"/><g transform="translate(38,682)"><path d="M1 2 L5 0.5 L10.5 1.5 L10.5 12 L5 13.5 L1 12 Z" fill="#e9cf7c" stroke="#c9a850" stroke-width="0.7"/><path d="M1 2 L5 3.3 L5 13.5 L1 12 Z" fill="#f3dc96" stroke="#c9a850" stroke-width="0.6"/><path d="M9.3 9.5 L10.8 10.2 L10.8 12 L9.3 11.3 Z" fill="#36b0c8"/></g><path d="M50.5 709 L54 709 L55 707.5 L56.5 709.5 L57.5 701.5 L58.5 714.5 L59.8 706 L61 709 L63.3 709" fill="none" stroke="#3344cc" stroke-width="1.1"/><text x="41.8" y="635.1" font-size="10" fill="#2b3846" stroke="#2b3846" stroke-width="0.3" letter-spacing="-0.1">Simulation Results</text><text x="54.9" y="653.9" font-size="10" fill="#26313c" stroke="#26313c" stroke-width="0.45" letter-spacing="-0.3">BD9G500EFJ Frequency</text><text x="54.9" y="673" font-size="10" fill="#26313c" stroke="#26313c" stroke-width="0.45" letter-spacing="-0.3">Copy of BD9G500EFJ</text><text x="54.9" y="691.5" font-size="10" fill="#26313c" stroke="#26313c" stroke-width="0.45" letter-spacing="-0.3">Copy of BD9G500EFJ</text><text x="69.3" y="710.4" font-size="10" fill="#26313c" stroke="#26313c" stroke-width="0.45">0</text></svg>
<svg class="abs" style="left:0;top:0" width="853" height="720" font-family="Liberation Sans, sans-serif"><path d="M188.9 641.1 L724.2 641.1" stroke="#dedede" stroke-width="1.1"/><path d="M188.9 652.6 L724.2 652.6" stroke="#dedede" stroke-width="1.1"/><path d="M188.9 664.4 L724.2 664.4" stroke="#dedede" stroke-width="1.1"/><path d="M188.9 676.5 L724.2 676.5" stroke="#dedede" stroke-width="1.1"/><path d="M242.4 629.7 L242.4 688.4" stroke="#d9d9d9" stroke-width="1.1"/><path d="M296.0 629.7 L296.0 688.4" stroke="#d9d9d9" stroke-width="1.1"/><path d="M349.5 629.7 L349.5 688.4" stroke="#d9d9d9" stroke-width="1.1"/><path d="M403.0 629.7 L403.0 688.4" stroke="#d9d9d9" stroke-width="1.1"/><path d="M456.5 629.7 L456.5 688.4" stroke="#d9d9d9" stroke-width="1.1"/><path d="M510.1 629.7 L510.1 688.4" stroke="#d9d9d9" stroke-width="1.1"/><path d="M563.6 629.7 L563.6 688.4" stroke="#d9d9d9" stroke-width="1.1"/><path d="M617.1 629.7 L617.1 688.4" stroke="#d9d9d9" stroke-width="1.1"/><path d="M670.7 629.7 L670.7 688.4" stroke="#d9d9d9" stroke-width="1.1"/><rect x="188.9" y="629.7" width="535.3" height="58.7" fill="none" stroke="#555" stroke-width="1.6"/><path d="M180.3 629.7 L188.9 629.7 M180.3 641.1 L188.9 641.1 M180.3 652.6 L188.9 652.6 M180.3 664.4 L188.9 664.4 M180.3 676.5 L188.9 676.5 M180.3 688.4 L188.9 688.4" stroke="#555" stroke-width="1.5"/><path d="M242.4 688.4 L242.4 693.2 M296.0 688.4 L296.0 693.2 M349.5 688.4 L349.5 693.2 M403.0 688.4 L403.0 693.2 M456.5 688.4 L456.5 693.2 M510.1 688.4 L510.1 693.2 M563.6 688.4 L563.6 693.2 M617.1 688.4 L617.1 693.2 M670.7 688.4 L670.7 693.2 M724.2 688.4 L724.2 693.2" stroke="#555" stroke-width="1.5"/><text x="176.2" y="632.8" font-size="8.2" fill="#44505c" text-anchor="end">1.0</text><text x="176.2" y="643.9" font-size="8.2" fill="#44505c" text-anchor="end">0.8</text><text x="176.2" y="655.8" font-size="8.2" fill="#44505c" text-anchor="end">0.6</text><text x="176.2" y="667.6" font-size="8.2" fill="#44505c" text-anchor="end">0.4</text><text x="176.2" y="679" font-size="8.2" fill="#44505c" text-anchor="end">0.2</text><text x="176.2" y="687.6" font-size="8.2" fill="#44505c" text-anchor="end">0.0</text><text x="242.4" y="702.4" font-size="8.2" fill="#44505c" text-anchor="middle">0.1</text><text x="296.0" y="702.4" font-size="8.2" fill="#44505c" text-anchor="middle">0.2</text><text x="349.5" y="702.4" font-size="8.2" fill="#44505c" text-anchor="middle">0.3</text><text x="403.0" y="702.4" font-size="8.2" fill="#44505c" text-anchor="middle">0.4</text><text x="456.5" y="702.4" font-size="8.2" fill="#44505c" text-anchor="middle">0.5</text><text x="510.1" y="702.4" font-size="8.2" fill="#44505c" text-anchor="middle">0.6</text><text x="563.6" y="702.4" font-size="8.2" fill="#44505c" text-anchor="middle">0.7</text><text x="617.1" y="702.4" font-size="8.2" fill="#44505c" text-anchor="middle">0.8</text><text x="670.7" y="702.4" font-size="8.2" fill="#44505c" text-anchor="middle">0.9</text><text x="724.2" y="702.4" font-size="8.2" fill="#44505c" text-anchor="middle">1.0</text><text x="456.4" y="711.8" font-size="8.8" fill="#444" text-anchor="middle">No Units</text><text x="0" y="0" font-size="8.8" fill="#555" text-anchor="middle" transform="translate(153.3 659.3) rotate(-90)">No Units</text></svg>
<svg class="abs" style="left:0;top:0" width="853" height="720"><rect x="825.2" y="625" width="32" height="58.5" rx="4" fill="#e6eaee" stroke="#5d6d7c" stroke-width="1.8"/><rect x="835.6" y="639.4" width="14.6" height="14.4" rx="3.2" fill="#e6eaee" stroke="#555" stroke-width="1.4"/><rect x="827.3" y="630.8" width="14.8" height="14.2" rx="3.2" fill="#e6eaee" stroke="#555" stroke-width="1.4"/><path d="M847.6 650.8 L843.6 646.8" stroke="#111" stroke-width="1.3"/><path d="M842.6 645.8 L846.6 646.4 L843.2 649.4 Z" fill="#111"/><rect x="830.2" y="659.5" width="18.5" height="21.5" fill="#fff" stroke="#444" stroke-width="0.8"/><text x="839.5" y="668.6" font-family="Liberation Serif" font-size="9.5" fill="#222" text-anchor="middle" letter-spacing="-0.5">F(x)</text><rect x="830.2" y="670.7" width="18.5" height="10.4" fill="#222"/><rect x="832.6" y="672.2" width="1.8" height="1.6" fill="#eee"/><rect x="836.5" y="672.2" width="1.8" height="1.6" fill="#eee"/><rect x="840.4" y="672.2" width="1.8" height="1.6" fill="#eee"/><rect x="844.3" y="672.2" width="1.8" height="1.6" fill="#eee"/><rect x="832.6" y="675.4" width="1.8" height="1.6" fill="#eee"/><rect x="836.5" y="675.4" width="1.8" height="1.6" fill="#eee"/><rect x="840.4" y="675.4" width="1.8" height="1.6" fill="#eee"/><rect x="844.3" y="675.4" width="1.8" height="1.6" fill="#eee"/><rect x="832.6" y="678.6" width="1.8" height="1.6" fill="#eee"/><rect x="836.5" y="678.6" width="1.8" height="1.6" fill="#eee"/><rect x="840.4" y="678.6" width="1.8" height="1.6" fill="#eee"/><rect x="844.3" y="678.6" width="1.8" height="1.6" fill="#eee"/></svg>
<!--/BOT-->
</body></html>
